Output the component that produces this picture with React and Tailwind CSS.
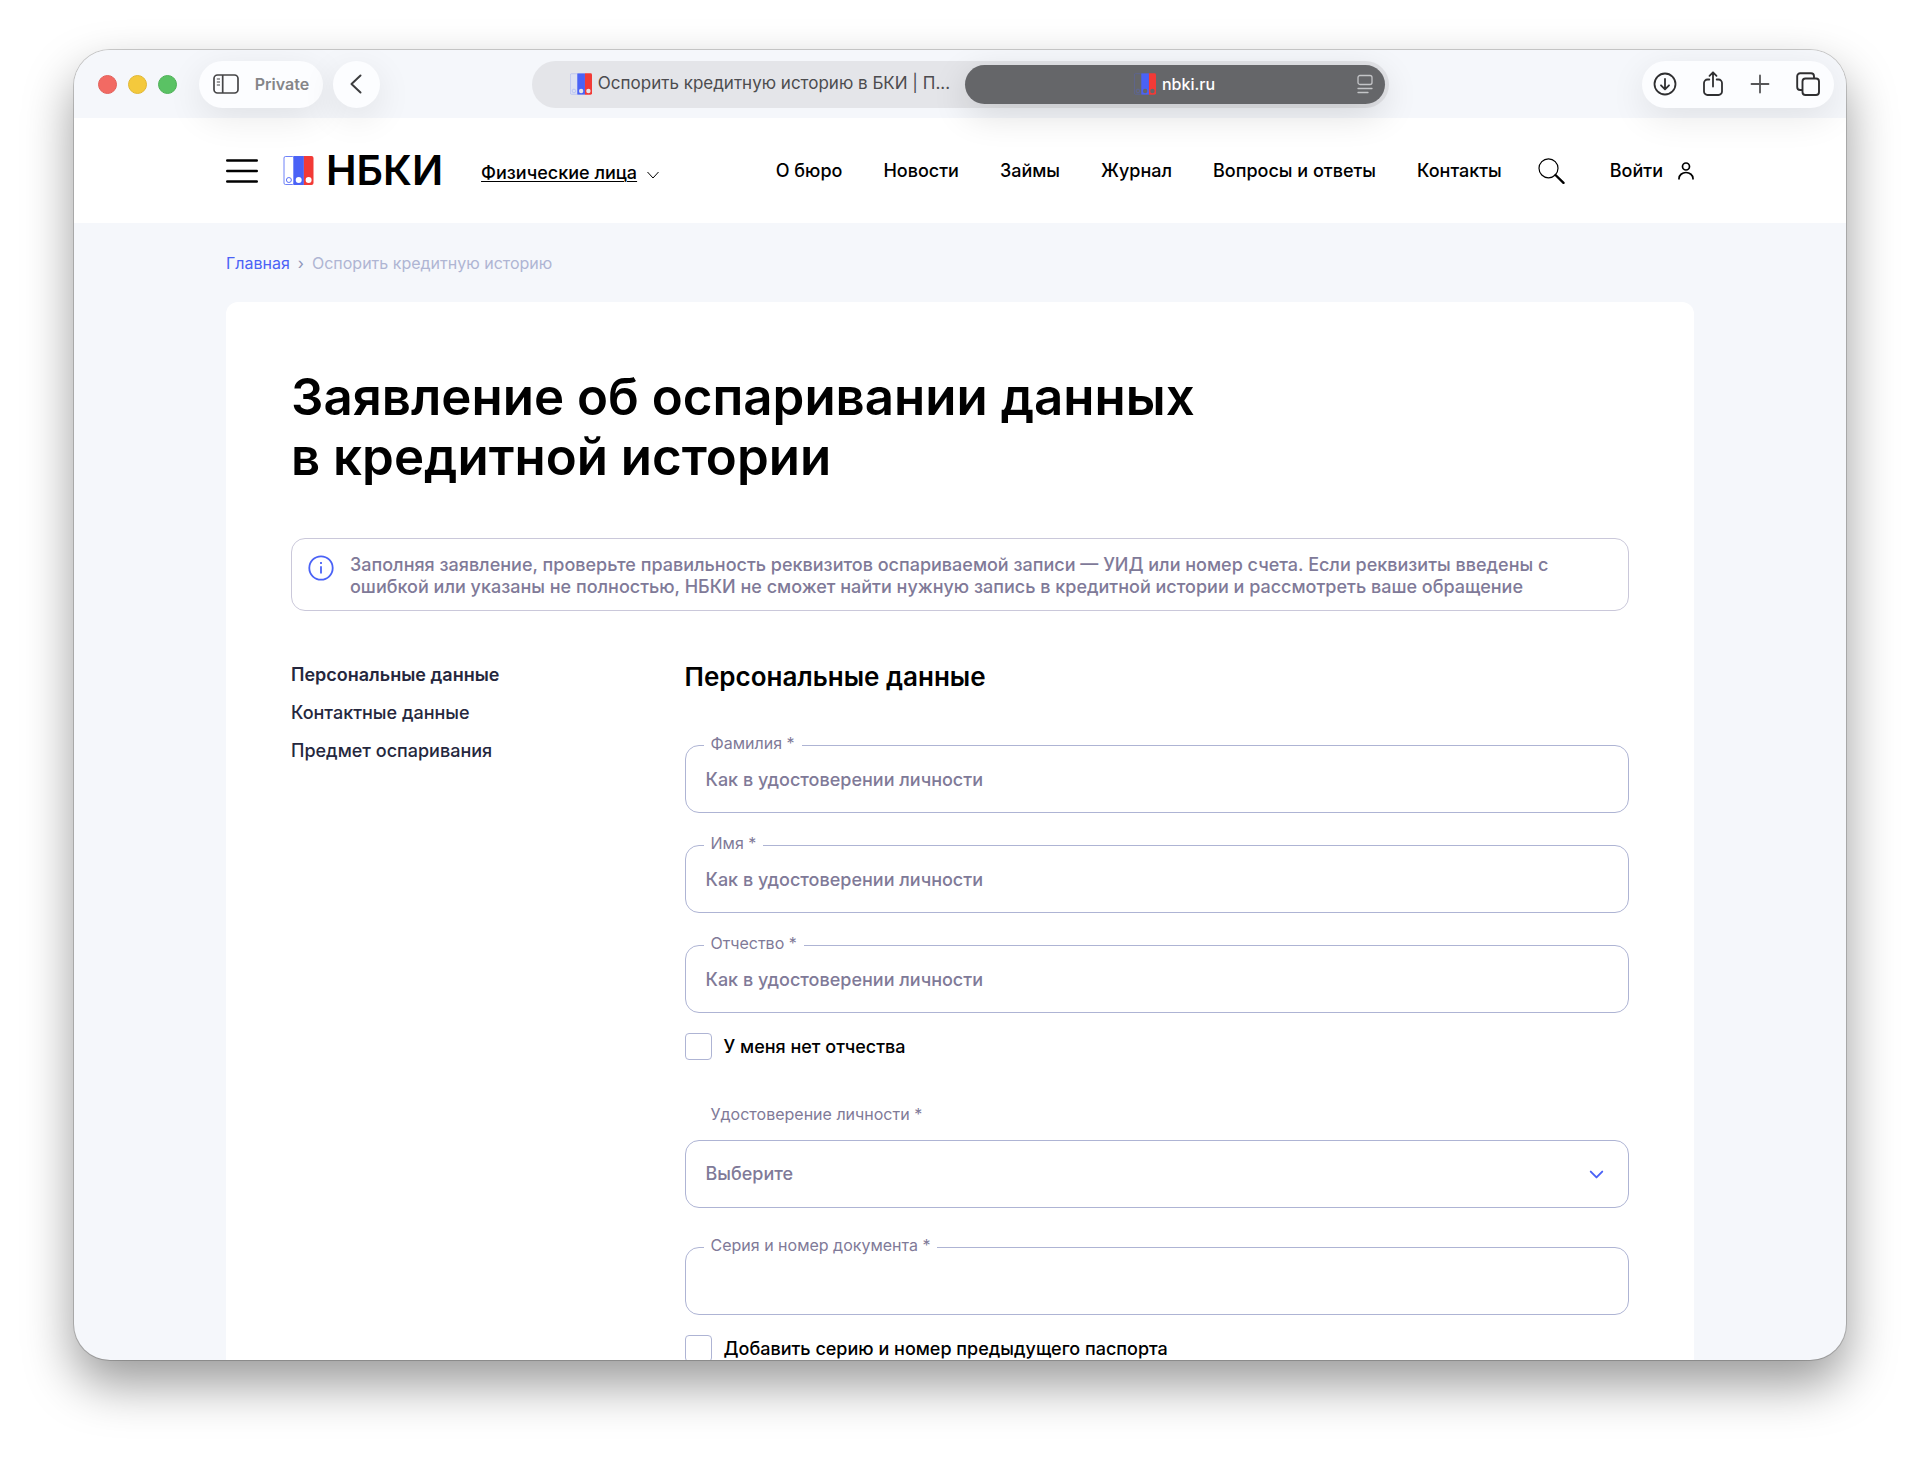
import { ChevronDown } from 'lucide-react'

const navLinks = ['О бюро', 'Новости', 'Займы', 'Журнал', 'Вопросы и ответы', 'Контакты']

const sections = [
  { label: 'Персональные данные', active: true },
  { label: 'Контактные данные' },
  { label: 'Предмет оспаривания' },
]

function Logo({ className, hollow = '#ffffff', dot = '#ffffff', edge = '#4a62f6' }) {
  return (
    <svg className={className} viewBox="0 0 30 29" aria-hidden="true">
      <rect x="0.5" y="0.5" width="10" height="28" rx="1.5" fill={hollow} stroke={edge} strokeWidth="0.8" />
      <rect x="10" y="0" width="10.4" height="29" fill="#4a62f6" />
      <path d="M20.4 0H28a2 2 0 0 1 2 2V27a2 2 0 0 1-2 2H20.4Z" fill="#f23a36" />
      <circle cx="5.4" cy="24" r="2.5" fill="none" stroke={edge} strokeWidth="0.9" />
      <circle cx="15.2" cy="24" r="3" fill={dot} />
      <circle cx="25.1" cy="24" r="3" fill={dot} />
    </svg>
  )
}

function Toolbar() {
  return (
    <div className="relative z-10 h-[68px] shrink-0 grid grid-cols-[1fr_857px_1fr] items-center bg-[#f5f7fb] px-3">
      <div className="flex items-center pl-3">
        <div className="flex gap-[11px]">
          <span className="w-[19px] h-[19px] rounded-full bg-[#f26a63] border border-[#e2605a]" />
          <span className="w-[19px] h-[19px] rounded-full bg-[#f4c93c] border border-[#e0b734]" />
          <span className="w-[19px] h-[19px] rounded-full bg-[#5ac264] border border-[#4fb158]" />
        </div>
        <button className="ml-[22px] h-[47px] w-[124px] flex items-center justify-center gap-4 rounded-full bg-[#fcfdff] shadow-[0_10px_36px_rgba(0,0,0,0.09)]">
          <svg className="w-[26px] h-5 shrink-0" viewBox="0 0 26 20" fill="none" stroke="#454547" strokeWidth="1.7" aria-hidden="true">
            <rect x="1" y="1" width="24" height="18" rx="3.5" />
            <path d="M9.7 1V19" />
            <path d="M3.8 5H7M3.8 8H7M3.8 11H7" strokeWidth="1.2" />
          </svg>
          <span className="text-base font-semibold text-[#858588]">Private</span>
        </button>
        <button aria-label="Назад" className="ml-2.5 w-[47px] h-[47px] pr-0.5 flex items-center justify-center rounded-full bg-[#fcfdff] shadow-[0_10px_36px_rgba(0,0,0,0.09)]">
          <svg className="w-3 h-5" viewBox="0 0 12 20" fill="none" stroke="#3d3d3f" strokeWidth="2" strokeLinecap="round" strokeLinejoin="round" aria-hidden="true">
            <path d="M10.5 1.5 1.5 10l9 8.5" />
          </svg>
        </button>
      </div>

      <div className="h-[47px] p-1 flex rounded-full bg-[#e4e5e9] text-base">
        <button className="flex-1 flex items-center justify-center gap-1.5 pl-5 text-[17px] text-[#4c4c4f]">
          <Logo className="w-[22px] h-[22px]" hollow="#dde1f2" dot="#e4e5e9" edge="#a9b6f2" />
          Оспорить кредитную историю в БКИ | П...
        </button>
        <button className="relative w-[420px] flex items-center justify-center gap-1.5 rounded-full bg-[#656669] font-medium text-white shadow-[0_10px_36px_rgba(0,0,0,0.14)]">
          <Logo className="w-[22px] h-[22px]" hollow="#656669" dot="#656669" edge="#5b66ab" />
          nbki.ru
          <svg className="absolute right-3 w-4 h-5" viewBox="0 0 16 20" fill="none" stroke="#c4c5c8" strokeWidth="1.3" strokeLinecap="round" aria-hidden="true">
            <rect x="1" y="1.5" width="14" height="9" rx="2" />
            <path d="M1 14.5H15M1 18.5H11" />
          </svg>
        </button>
      </div>

      <div className="flex justify-end">
        <div className="w-48 h-[47px] flex items-center justify-between pl-[11px] pr-3.5 rounded-full bg-[#fcfdff] text-[#2f2f31] shadow-[0_10px_36px_rgba(0,0,0,0.09)]">
          <button aria-label="Загрузки" className="w-6 flex justify-center">
            <svg className="w-6 h-6" viewBox="0 0 24 24" fill="none" stroke="currentColor" strokeWidth="1.8" strokeLinecap="round" strokeLinejoin="round" aria-hidden="true">
              <circle cx="12" cy="12" r="10.5" />
              <path d="M12 7V17M8 13.3 12 17.3 16 13.3" />
            </svg>
          </button>
          <button aria-label="Поделиться" className="w-6 flex justify-center">
            <svg className="w-5 h-[26px]" viewBox="0 0 20 26" fill="none" stroke="currentColor" strokeWidth="1.8" strokeLinecap="round" strokeLinejoin="round" aria-hidden="true">
              <path d="M6.3 8.5H4.5A3.5 3.5 0 0 0 1 12V20.5A3.5 3.5 0 0 0 4.5 24H15.5A3.5 3.5 0 0 0 19 20.5V12A3.5 3.5 0 0 0 15.5 8.5H13.7" />
              <path d="M10 15.5V1.5M6.5 4.8 10 1.3 13.5 4.8" />
            </svg>
          </button>
          <button aria-label="Новая вкладка" className="w-6 flex justify-center">
            <svg className="w-5 h-5" viewBox="0 0 20 20" fill="none" stroke="#555557" strokeWidth="1.8" strokeLinecap="round" aria-hidden="true">
              <path d="M10 1.5V18.5M1.5 10H18.5" />
            </svg>
          </button>
          <button aria-label="Обзор вкладок" className="w-6 flex justify-center">
            <svg className="w-6 h-6" viewBox="0 0 24 24" fill="none" stroke="currentColor" strokeWidth="1.9" strokeLinejoin="round" aria-hidden="true">
              <rect x="6.5" y="6.5" width="16.5" height="16.5" rx="3" />
              <path d="M6.5 18H4.2A3 3 0 0 1 1.2 15V4.2A3 3 0 0 1 4.2 1.2H15A3 3 0 0 1 18 4.2V6.5" />
            </svg>
          </button>
        </div>
      </div>
    </div>
  )
}

function Header() {
  return (
    <header className="h-[105px] shrink-0 bg-white">
      <div className="w-full max-w-[1468px] h-full mx-auto flex items-center justify-between text-black font-[450]">
        <div className="flex items-center">
          <button aria-label="Меню">
            <svg className="w-8 h-6" viewBox="0 0 32 24" stroke="#000" strokeWidth="2.4" strokeLinecap="round" aria-hidden="true">
              <path d="M1.2 1.5H30.8M1.2 12H30.8M1.2 22.5H30.8" />
            </svg>
          </button>
          <a href="#" className="ml-[25px] flex items-center gap-3">
            <Logo className="w-[31px] h-[29px]" />
            <span className="text-[41px] leading-none font-semibold">НБКИ</span>
          </a>
          <a href="#" className="ml-[38px] flex items-center gap-2.5 pt-1 text-lg">
            <span className="underline decoration-1 underline-offset-2">Физические лица</span>
            <svg className="w-3 h-2 mt-1" viewBox="0 0 12 8" fill="none" stroke="#000" strokeWidth="1" aria-hidden="true">
              <path d="M0.5 1 6 7 11.5 1" />
            </svg>
          </a>
        </div>
        <div className="flex items-center text-lg">
          <nav className="flex gap-[41px]">
            {navLinks.map(link => (
              <a key={link} href="#">{link}</a>
            ))}
          </nav>
          <button aria-label="Поиск" className="ml-9">
            <svg className="w-7 h-[26px]" viewBox="0 0 28 26" fill="none" stroke="#000" strokeLinecap="round" aria-hidden="true">
              <circle cx="10.5" cy="10.3" r="9.5" strokeWidth="1.2" />
              <path d="M17.5 17 25.5 24.8" strokeWidth="2.4" />
            </svg>
          </button>
          <a href="#" className="ml-11 flex items-center gap-[15px]">
            Войти
            <svg className="w-4 h-[18px]" viewBox="0 0 16 18" fill="none" stroke="#000" strokeWidth="1.7" aria-hidden="true">
              <circle cx="8" cy="4.5" r="3.5" />
              <path d="M1 17.5V16.5A7 6 0 0 1 15 16.5V17.5" />
            </svg>
          </a>
        </div>
      </div>
    </header>
  )
}

function Field({ id, label, placeholder }) {
  return (
    <div className="relative">
      <label htmlFor={id} className="absolute left-[19px] -top-3 px-[7px] bg-white text-base leading-5 text-[#7f7a98]">{label}</label>
      <input id={id} type="text" placeholder={placeholder}
        className="block w-full h-[68px] px-5 rounded-[14px] border border-[#aeb4d4] bg-white text-lg font-[450] placeholder:text-[#7f7a98] outline-none" />
    </div>
  )
}

function Checkbox({ id, label }) {
  return (
    <div className="mt-5 flex items-center gap-3">
      <input id={id} type="checkbox" className="appearance-none w-[27px] h-[27px] shrink-0 rounded-[4px] border border-[#aeb4d4] bg-white" />
      <label htmlFor={id} className="text-lg leading-5 font-[450] text-black">{label}</label>
    </div>
  )
}

export default function App() {
  return (
    <div className="h-screen overflow-hidden bg-white px-[74px] pt-[50px] pb-[97px] font-['Inter','Noto_Sans',sans-serif]">
      <div className="h-full flex flex-col overflow-hidden rounded-[36px] bg-[#f5f7fb] shadow-[0_0_0_1px_rgba(0,0,0,0.18),0_24px_50px_rgba(0,0,0,0.4)]">
        <Toolbar />
        <Header />

        <div className="w-full max-w-[1468px] flex-1 min-h-0 mx-auto flex flex-col">
          <nav className="h-[79px] shrink-0 flex items-center text-base">
            <a href="#" className="text-[#4a62f6]">Главная</a>
            <span className="px-2 text-[#8f95b8]">›</span>
            <span className="text-[#afb5d3]">Оспорить кредитную историю</span>
          </nav>

          <main className="flex-1 min-h-0 overflow-hidden rounded-t-xl bg-white px-[65px] pt-[65px]">
            <h1 className="text-[51px] leading-[60px] font-semibold text-black">
              Заявление об оспаривании данных<br />в кредитной истории
            </h1>

            <div className="mt-[51px] h-[73px] flex gap-4 px-4 rounded-[14px] border border-[#cac8da]">
              <svg className="w-[26px] h-[26px] mt-4 shrink-0" viewBox="0 0 26 26" fill="none" stroke="#4a62f6" strokeWidth="1.8" aria-hidden="true">
                <circle cx="13" cy="13" r="11.7" />
                <path d="M13 11.2V18.5" />
                <path d="M13 7V9" />
              </svg>
              <p className="mt-[15px] text-lg leading-[22px] font-[450] text-[#7f7a98]">
                Заполняя заявление, проверьте правильность реквизитов оспариваемой записи — УИД или номер счета. Если реквизиты введены с<br />
                ошибкой или указаны не полностью, НБКИ не сможет найти нужную запись в кредитной истории и рассмотреть ваше обращение
              </p>
            </div>

            <div className="mt-[50px] grid grid-cols-[5fr_12fr]">
              <nav className="flex flex-col gap-2.5 text-lg leading-7 text-[#25273d]">
                {sections.map(s => (
                  <a key={s.label} href="#" className={s.active ? 'font-semibold' : 'font-[450]'}>{s.label}</a>
                ))}
              </nav>

              <form>
                <h2 className="text-[26px] leading-8 font-semibold text-black">Персональные данные</h2>
                <div className="mt-[52px] flex flex-col gap-8">
                  <Field id="surname" label="Фамилия *" placeholder="Как в удостоверении личности" />
                  <Field id="name" label="Имя *" placeholder="Как в удостоверении личности" />
                  <Field id="patronymic" label="Отчество *" placeholder="Как в удостоверении личности" />
                </div>
                <Checkbox id="no-patronymic" label="У меня нет отчества" />

                <div className="mt-11">
                  <label htmlFor="document" className="block ml-[26px] text-base leading-5 text-[#7f7a98]">Удостоверение личности *</label>
                  <div className="relative mt-4">
                    <select id="document" className="appearance-none block w-full h-[68px] px-5 rounded-[14px] border border-[#aeb4d4] bg-white text-lg font-[450] text-[#7f7a98]">
                      <option>Выберите</option>
                    </select>
                    <ChevronDown className="absolute right-[21px] top-[23px] pointer-events-none text-[#4a62f6]" size={23} strokeWidth={2} />
                  </div>
                </div>

                <div className="mt-[39px]">
                  <Field id="number" label="Серия и номер документа *" />
                </div>
                <Checkbox id="previous" label="Добавить серию и номер предыдущего паспорта" />
              </form>
            </div>
          </main>
        </div>
      </div>
    </div>
  )
}
